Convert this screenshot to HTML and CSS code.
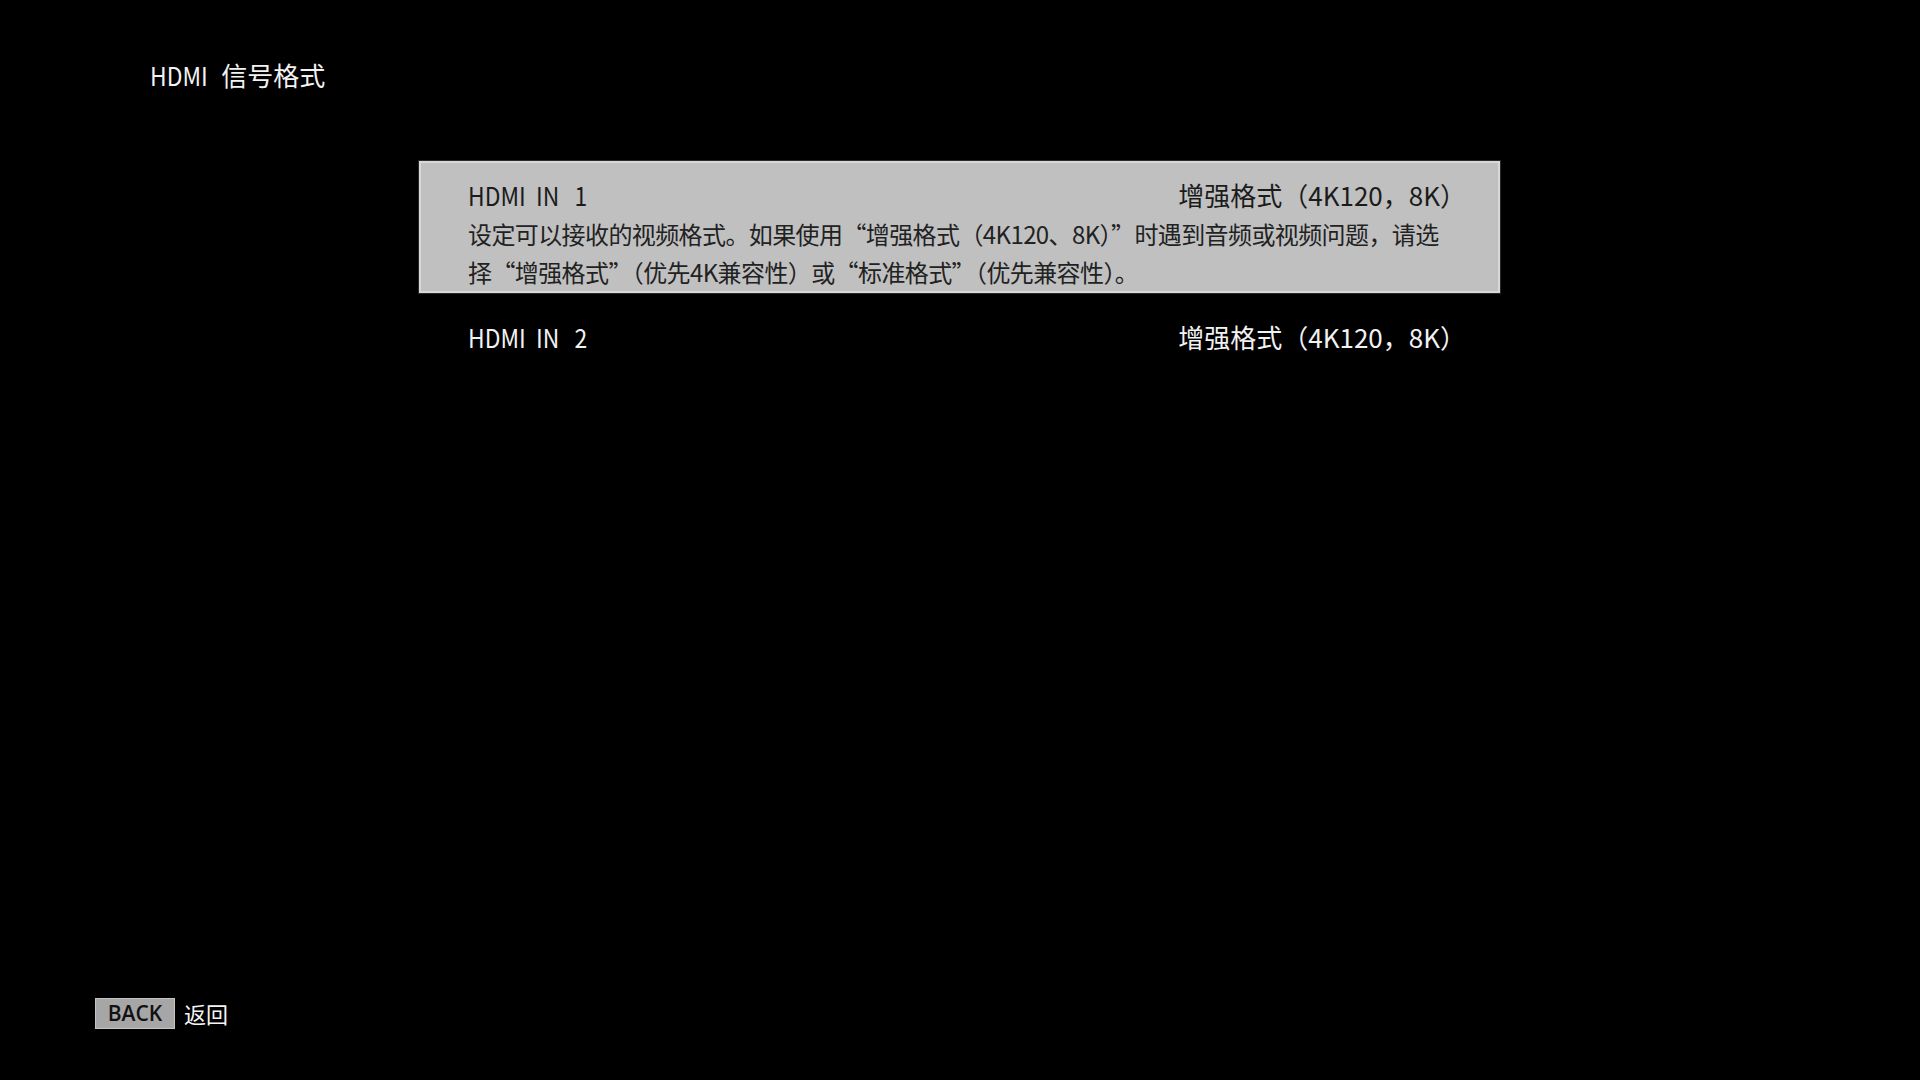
FILE: index.html
```html
<!DOCTYPE html>
<html lang="zh-CN">
<head>
<meta charset="utf-8">
<title>HDMI 信号格式</title>
<link rel="stylesheet" href="styles.css">
</head>
<body>
<div class="screen">
  <header class="page-title"><span class="latin">HDMI</span>&nbsp;&nbsp;信号格式</header>
  <main class="menu">
    <div class="row selected">
      <div class="row-head">
        <span class="label">HDMI&nbsp;&nbsp;IN&nbsp;&nbsp;&nbsp;1</span>
        <span class="value">增强格式（4K120，8K）</span>
      </div>
      <p class="desc">设定可以接收的视频格式。如果使用“增强格式（4K120、8K）”时遇到音频或视频问题，请选<br>择“增强格式”（优先4K兼容性）或“标准格式”（优先兼容性）。</p>
    </div>
    <div class="row">
      <div class="row-head">
        <span class="label">HDMI&nbsp;&nbsp;IN&nbsp;&nbsp;&nbsp;2</span>
        <span class="value">增强格式（4K120，8K）</span>
      </div>
    </div>
  </main>
  <footer class="hints">
    <span class="key">BACK</span>
    <span class="key-label">返回</span>
  </footer>
</div>
</body>
</html>
```

FILE: styles.css
```css
* { box-sizing: border-box; }

html, body {
  margin: 0;
  padding: 0;
  background: #000;
}

body {
  font-family: "Noto Sans CJK SC", sans-serif;
  color: #f2f2f2;
}

.screen {
  width: 1920px;
  height: 1080px;
  display: flex;
  flex-direction: column;
}

.page-title {
  padding: 59px 0 0 150px;
  font-size: 26px;
  line-height: 32px;
  height: 91px;
}

.latin,
.label {
  display: inline-block;
  transform: scaleX(0.88);
  transform-origin: left center;
}

.page-title .latin {
  margin-right: -6px;
}

.menu {
  margin: 70px 0 0 419px;
  width: 1081px;
  display: flex;
  flex-direction: column;
  gap: 8px;
}

.row {
  padding: 16px 32px 0 47px;
  border: 2px solid transparent;
}

.row.selected {
  background: #c0c0c0;
  border-color: #d8d8d8;
  box-shadow: 0 0 0 1px #2a2a2a;
  color: #1b1b1b;
  padding: 14px 32px 0 47px;
  height: 132px;
}

.row-head {
  display: flex;
  justify-content: space-between;
  align-items: center;
  font-size: 26px;
  line-height: 36px;
}

.desc {
  margin: 2px 0 0;
  font-size: 24px;
  line-height: 38px;
  color: #222;
  letter-spacing: -0.6px;
}

.hints {
  margin-top: auto;
  padding: 0 0 51px 95px;
  display: flex;
  align-items: center;
  gap: 9px;
}

.key {
  display: inline-flex;
  align-items: center;
  justify-content: center;
  width: 80px;
  height: 31px;
  background: #a6a6a6;
  border: 1px solid #c4c4c4;
  color: #111;
  font-family: "Open Sans", sans-serif;
  font-weight: 600;
  font-size: 21px;
  line-height: 29px;
  padding-top: 1px;
}

.key-label {
  font-size: 22px;
  color: #f5f5f5;
}
```
